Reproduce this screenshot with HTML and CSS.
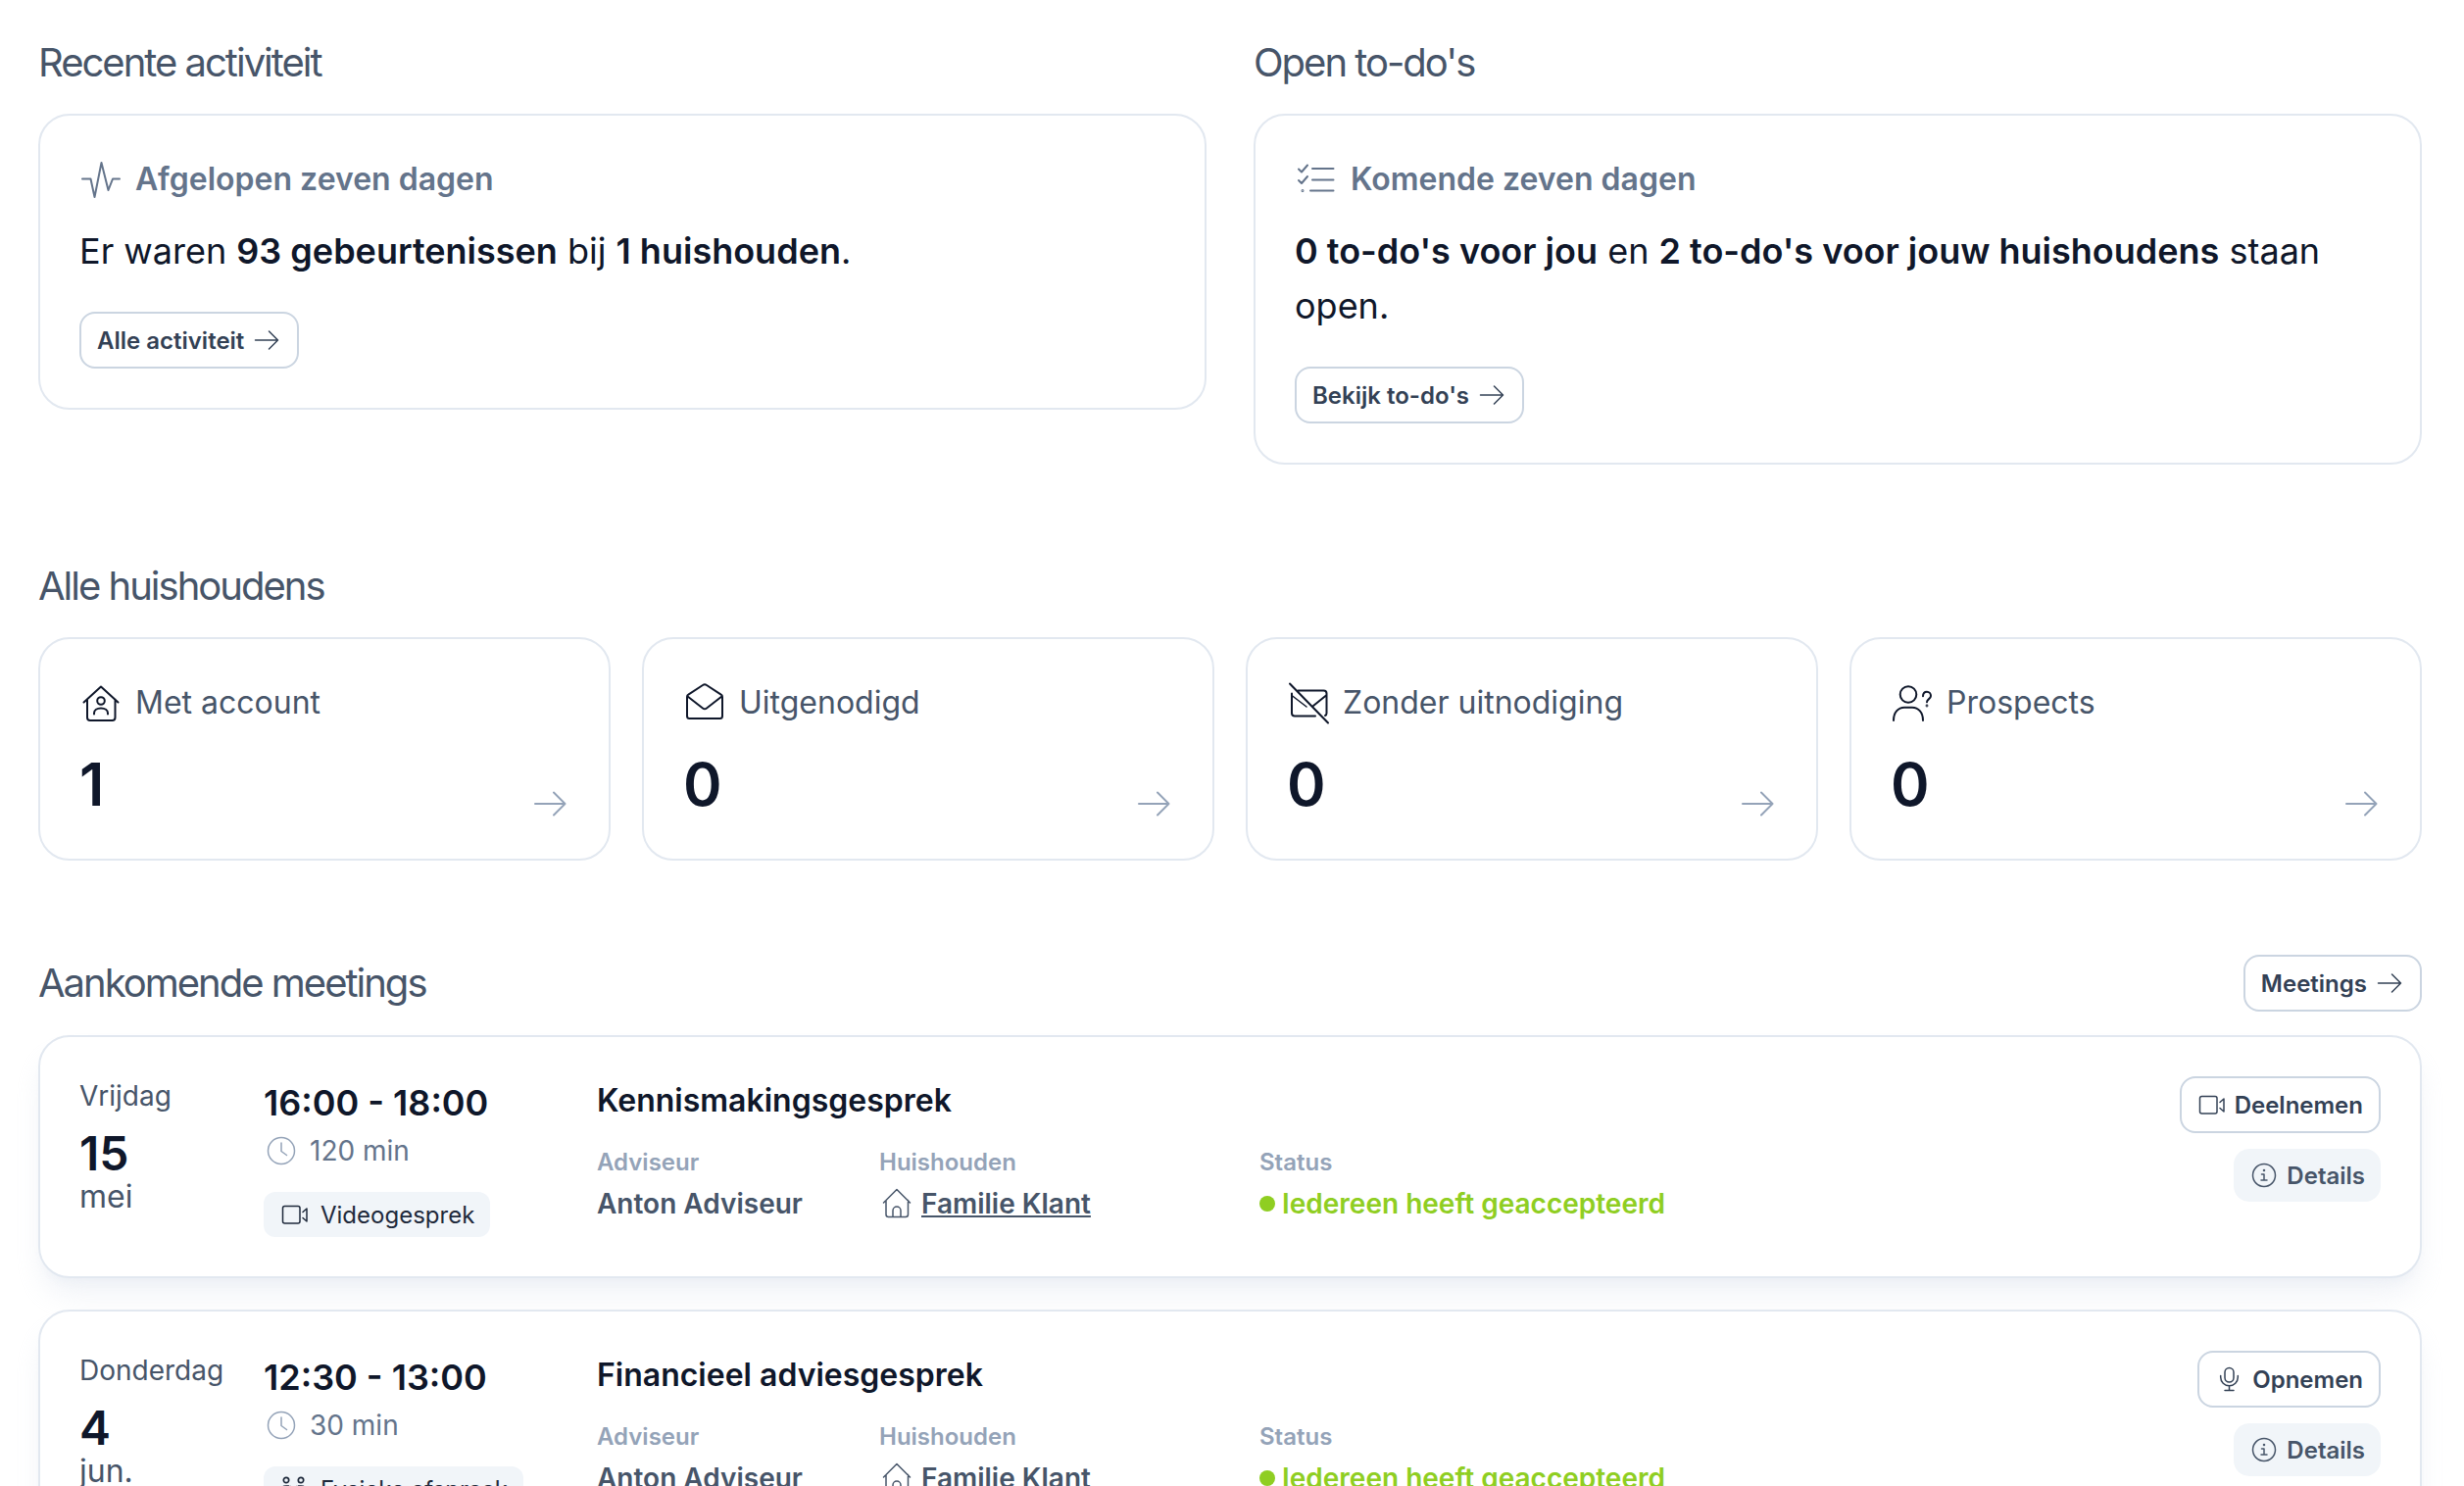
FILE: index.html
```html
<!DOCTYPE html>
<html lang="nl">
<head>
<meta charset="utf-8">
<meta name="viewport" content="width=device-width, initial-scale=1">
<title>Dashboard</title>
<link rel="stylesheet" href="styles.css">
</head>
<body>
<svg class="sprite" aria-hidden="true">
  <symbol id="arrow" viewBox="0 0 28 28"><path d="M1.500 13H24.500M15.500 4l9 9-9 9" stroke-width="1.500"/></symbol>
  <symbol id="arrow-lg" viewBox="0 0 40 32"><path d="M5 16H35.500M24 4.500l11.500 11.500-11.500 11.500"/></symbol>
  <symbol id="pulse" viewBox="0 0 44 44"><path d="M3 21.500H11.500L15.500 40 22.500 5 29.500 33 34 21.500H41"/></symbol>
  <symbol id="checklist" viewBox="0 0 44 44"><path d="M4 11.500l3 3 6-7M4 23l3 3 6-7M18 11h21.500M18 22.500h21.500M16 33.500h23.500"/><circle cx="8" cy="33.500" r=".5"/></symbol>
  <symbol id="house-user" viewBox="0 0 44 44"><path d="M4.500 21.500L22 5.500l17.500 16M8 18.500V37q0 3 3 3H33.500q3 0 3-3V18.500"/><circle cx="22" cy="20" r="3.800"/><path d="M15 33.500v-1c0-3 3-5 7-5s7 2 7 5v1"/></symbol>
  <symbol id="mail-open" viewBox="0 0 44 44"><path d="M4 16q0-1.500 1.300-2.300L20 4q2-1.300 4 0l14.700 9.700Q40 14.500 40 16v19.500q0 2.500-2.500 2.500h-31Q4 38 4 35.500zM4.600 15.500L20 27.500q2 1.500 4 0L39.400 15.500"/></symbol>
  <symbol id="mail-off" viewBox="0 0 44 44"><path d="M3 2.500L42 42.500M11.500 9.500H37.500q3 0 3 3V32.500q0 2-1.500 2.500M5 12.500V32.500q0 3 3 3H29M40 14.500L27 25"/><path d="M5 14.500L20 26" stroke-width="1.500"/></symbol>
  <symbol id="user-question" viewBox="0 0 44 44"><circle cx="18" cy="13.500" r="8.300"/><path d="M3 40c0-8.500 5-13.300 11-13.300h8c6 0 11 4.800 11 13.300M33 15.300c0-2.800 1.700-4.600 4-4.600s4 1.800 4 4.300c0 3-4 3.200-4 6.200"/><circle cx="37" cy="25" r=".4"/></symbol>
  <symbol id="clock" viewBox="0 0 36 36"><path d="M4.500 18a13.500 13.500 0 1 0 27 0a13.500 13.500 0 1 0-27 0M18 10v8.500l5.500 4" stroke-width="1.500"/></symbol>
  <symbol id="video" viewBox="0 0 28 28"><g stroke-width="1.500"><rect x="2.500" y="4.500" width="17.500" height="17.500" rx="2"/><path d="M23 10.500l4-3.500v13l-4-3.500"/></g></symbol>
  <symbol id="people" viewBox="0 0 28 28"><g stroke-width="1.700"><circle cx="6" cy="4" r="2.700"/><circle cx="21" cy="4" r="2.700"/><path d="M1 17v-2.500C1 11.500 3 10 6 10h2.500M26 17v-2.500c0-3-2-4.500-5-4.500h-2.500M10.500 10.500v3M16.500 10.500v3M13.500 12v2M1 17h25M5 17v8M22 17v8"/></g></symbol>
  <symbol id="info" viewBox="0 0 28 28"><g stroke-width="1.500"><circle cx="15" cy="13" r="11.500"/><path d="M12.500 12h2.500v6M12 18h6"/><circle cx="15" cy="8" r=".5"/></g></symbol>
  <symbol id="mic" viewBox="0 0 28 28"><g stroke-width="1.500"><rect x="10" y="1.500" width="9" height="14.500" rx="4.500"/><path d="M5.700 9.500V11a8.800 8.800 0 0 0 17.600 0V9.500M14.500 20v4.500M10 24.500h9"/></g></symbol>
  <symbol id="house" viewBox="0 0 36 36"><path d="M4.500 17L18 3.500 31.500 17M7 14.500V29q0 2.500 2.500 2.500H27q2.500 0 2.500-2.500V14.500M14 31.500V25a4 4 0 0 1 8 0v6.500" stroke-width="1.500"/></symbol>
</svg>

<main class="page">
  <div class="overview">
    <section>
      <div class="section-head"><h2>Recente activiteit</h2></div>
      <div class="card">
        <h3 class="card-title"><svg class="icon-44"><use href="#pulse"/></svg>Afgelopen zeven dagen</h3>
        <p class="summary">Er waren <strong>93 gebeurtenissen</strong> bij <strong>1 huishouden</strong>.</p>
        <a class="btn" href="#activiteit">Alle activiteit<svg class="icon-28"><use href="#arrow"/></svg></a>
      </div>
    </section>
    <section>
      <div class="section-head"><h2>Open to-do's</h2></div>
      <div class="card">
        <h3 class="card-title"><svg class="icon-44"><use href="#checklist"/></svg>Komende zeven dagen</h3>
        <p class="summary"><strong>0 to-do's voor jou</strong> en <strong>2 to-do's voor jouw huishoudens</strong> staan open.</p>
        <a class="btn" href="#todos">Bekijk to-do's<svg class="icon-28"><use href="#arrow"/></svg></a>
      </div>
    </section>
  </div>

  <section>
    <div class="section-head"><h2>Alle huishoudens</h2></div>
    <div class="stats">
      <a class="card stat" href="#account">
        <span class="stat-title"><svg class="icon-44"><use href="#house-user"/></svg>Met account</span>
        <span class="stat-row"><span class="stat-value">1</span><svg class="stat-arrow"><use href="#arrow-lg"/></svg></span>
      </a>
      <a class="card stat" href="#uitgenodigd">
        <span class="stat-title"><svg class="icon-44"><use href="#mail-open"/></svg>Uitgenodigd</span>
        <span class="stat-row"><span class="stat-value">0</span><svg class="stat-arrow"><use href="#arrow-lg"/></svg></span>
      </a>
      <a class="card stat" href="#zonder">
        <span class="stat-title"><svg class="icon-44"><use href="#mail-off"/></svg>Zonder uitnodiging</span>
        <span class="stat-row"><span class="stat-value">0</span><svg class="stat-arrow"><use href="#arrow-lg"/></svg></span>
      </a>
      <a class="card stat" href="#prospects">
        <span class="stat-title"><svg class="icon-44"><use href="#user-question"/></svg>Prospects</span>
        <span class="stat-row"><span class="stat-value">0</span><svg class="stat-arrow"><use href="#arrow-lg"/></svg></span>
      </a>
    </div>
  </section>

  <section>
    <div class="section-head">
      <h2>Aankomende meetings</h2>
      <a class="btn" href="#meetings">Meetings<svg class="icon-28"><use href="#arrow"/></svg></a>
    </div>
    <div class="meetings">
      <article class="card meeting">
        <div class="date">
          <span class="weekday">Vrijdag</span>
          <span class="day">15</span>
          <span class="month">mei</span>
        </div>
        <div class="slot">
          <span class="time">16:00 - 18:00</span>
          <span class="duration"><svg class="icon-36"><use href="#clock"/></svg>120 min</span>
          <span class="tag"><svg class="icon-28"><use href="#video"/></svg>Videogesprek</span>
        </div>
        <div class="info">
          <h3 class="meeting-title">Kennismakingsgesprek</h3>
          <dl class="facts">
            <div><dt>Adviseur</dt><dd>Anton Adviseur</dd></div>
            <div><dt>Huishouden</dt><dd class="household"><svg class="icon-36"><use href="#house"/></svg><a href="#klant">Familie Klant</a></dd></div>
            <div><dt>Status</dt><dd class="status"><span class="dot"></span>Iedereen heeft geaccepteerd</dd></div>
          </dl>
        </div>
        <div class="actions">
          <button type="button" class="btn"><svg class="icon-28"><use href="#video"/></svg>Deelnemen</button>
          <button type="button" class="btn btn-soft"><svg class="icon-28"><use href="#info"/></svg>Details</button>
        </div>
      </article>
      <article class="card meeting">
        <div class="date">
          <span class="weekday">Donderdag</span>
          <span class="day">4</span>
          <span class="month">jun.</span>
        </div>
        <div class="slot">
          <span class="time">12:30 - 13:00</span>
          <span class="duration"><svg class="icon-36"><use href="#clock"/></svg>30 min</span>
          <span class="tag"><svg class="icon-28"><use href="#people"/></svg>Fysieke afspraak</span>
        </div>
        <div class="info">
          <h3 class="meeting-title">Financieel adviesgesprek</h3>
          <dl class="facts">
            <div><dt>Adviseur</dt><dd>Anton Adviseur</dd></div>
            <div><dt>Huishouden</dt><dd class="household"><svg class="icon-36"><use href="#house"/></svg><a href="#klant">Familie Klant</a></dd></div>
            <div><dt>Status</dt><dd class="status"><span class="dot"></span>Iedereen heeft geaccepteerd</dd></div>
          </dl>
        </div>
        <div class="actions">
          <button type="button" class="btn"><svg class="icon-28"><use href="#mic"/></svg>Opnemen</button>
          <button type="button" class="btn btn-soft"><svg class="icon-28"><use href="#info"/></svg>Details</button>
        </div>
      </article>
    </div>
  </section>
</main>
</body>
</html>
```
FILE: styles.css
```css
* {
  box-sizing: border-box;
  margin: 0;
  padding: 0;
}

body {
  background: #fff;
  color: #0f172a;
  font-family: Inter, "Liberation Sans", sans-serif;
}

a {
  color: inherit;
  text-decoration: none;
}

svg {
  flex: none;
  fill: none;
  stroke: currentColor;
  stroke-width: 2px;
  stroke-linecap: round;
  stroke-linejoin: round;
}

.sprite {
  display: none;
}

.icon-28 {
  width: 28px;
  height: 28px;
}

.icon-36 {
  width: 36px;
  height: 36px;
}

.icon-44 {
  width: 44px;
  height: 44px;
}

.page {
  display: flex;
  flex-direction: column;
  gap: 96px;
  padding: 36px 43px 96px 39px;
}

.overview {
  display: grid;
  grid-template-columns: repeat(2, 1fr);
  gap: 48px;
  align-items: start;
}

.section-head {
  display: flex;
  align-items: center;
  justify-content: space-between;
  margin-bottom: 24px;
}

h2 {
  font-size: 40px;
  line-height: 56px;
  font-weight: 400;
  letter-spacing: -0.05em;
  color: #475569;
}

.card {
  display: block;
  padding: 40px;
  border: 2px solid #e2e8f0;
  border-radius: 32px;
  background: #fff;
}

.card-title {
  display: flex;
  align-items: center;
  gap: 13px;
  margin-bottom: 20px;
  font-size: 32px;
  line-height: 50px;
  font-weight: 600;
  color: #64748b;
}

.summary {
  margin-bottom: 34px;
  font-size: 36px;
  line-height: 56px;
}

.summary strong {
  font-weight: 600;
}

.btn {
  display: inline-flex;
  align-items: center;
  gap: 10px;
  padding: 10px 16px 8px;
  border: 2px solid #cbd5e1;
  border-radius: 16px;
  background: #fff;
  color: #334155;
  font-family: inherit;
  font-size: 24px;
  line-height: 36px;
  font-weight: 600;
  vertical-align: top;
}

.btn-soft {
  border: 0;
  background: #f1f5f9;
  color: #475569;
}

.stats {
  display: grid;
  grid-template-columns: repeat(4, 1fr);
  gap: 32px;
}

.stat {
  display: flex;
  flex-direction: column;
  gap: 22px;
}

.stat-title {
  display: flex;
  align-items: center;
  gap: 13px;
  font-size: 32px;
  line-height: 50px;
  color: #475569;
}

.stat-title svg {
  color: #0f172a;
}

.stat-row {
  display: flex;
  align-items: flex-end;
  justify-content: space-between;
}

.stat-value {
  font-size: 60px;
  line-height: 72px;
  font-weight: 600;
}

.stat-arrow {
  width: 40px;
  height: 32px;
  color: #94a3b8;
}

.meetings {
  display: flex;
  flex-direction: column;
  gap: 32px;
}

.meeting {
  display: grid;
  grid-template-columns: 188px 340px 1fr auto;
  box-shadow: 0 20px 30px -6px rgba(226, 232, 240, 0.6), 0 8px 12px -8px rgba(226, 232, 240, 0.6);
}

.date,
.slot,
.actions {
  display: flex;
  flex-direction: column;
  align-items: flex-start;
}

.weekday {
  margin-bottom: 14px;
  font-size: 28px;
  line-height: 40px;
  color: #475569;
}

.day {
  font-size: 48px;
  line-height: 50px;
  font-weight: 600;
}

.month {
  font-size: 32px;
  line-height: 38px;
  color: #475569;
}

.time {
  font-size: 36px;
  line-height: 54px;
  font-weight: 600;
}

.duration {
  display: flex;
  align-items: center;
  gap: 11px;
  margin-bottom: 20px;
  font-size: 28px;
  line-height: 44px;
  color: #64748b;
}

.duration svg {
  color: #94a3b8;
}

.tag {
  display: flex;
  align-items: center;
  gap: 13px;
  padding: 6px 16px 4px 17px;
  border-radius: 12px;
  background: #f1f5f9;
  color: #1e293b;
  font-size: 24px;
  line-height: 36px;
}

.meeting-title {
  margin-bottom: 18px;
  font-size: 32px;
  line-height: 50px;
  font-weight: 600;
}

.facts {
  display: grid;
  grid-template-columns: 288px 388px 1fr;
}

dt {
  font-size: 24px;
  line-height: 40px;
  font-weight: 600;
  color: #94a3b8;
}

dd {
  font-size: 28px;
  line-height: 44px;
  font-weight: 600;
  color: #475569;
}

.household,
.status {
  display: flex;
  align-items: center;
  gap: 7px;
}

.household a {
  text-decoration: underline;
}

.status {
  color: #8fce22;
}

.dot {
  width: 16px;
  height: 16px;
  border-radius: 50%;
  background: #8fce22;
}

.actions {
  align-items: flex-end;
  gap: 16px;
}
```
